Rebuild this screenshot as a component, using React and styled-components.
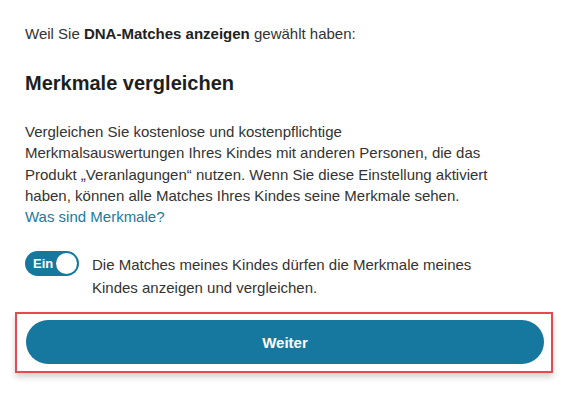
import React, { useState } from 'react'
import styled, { createGlobalStyle } from 'styled-components'

const GlobalStyle = createGlobalStyle`
  html, body {
    margin: 0;
    padding: 0;
    background: #fff;
  }
  body {
    font-family: "Liberation Sans", Arial, sans-serif;
    color: #333;
  }
`

const Page = styled.div`
  width: 566px;
  height: 394px;
  box-sizing: border-box;
  padding: 24px 22px 0 25px;
  overflow: hidden;
`

const Intro = styled.p`
  margin: 0;
  font-size: 15px;
  line-height: 20px;
  color: #333;
  b {
    font-weight: 700;
    color: #222;
  }
`

const Heading = styled.h2`
  margin: 26px 0 0;
  font-size: 20px;
  line-height: 26px;
  font-weight: 700;
  color: #1e1e1e;
`

const Body = styled.p`
  margin: 25px 0 0;
  font-size: 15px;
  line-height: 21.3px;
  color: #333;
`

const Link = styled.a`
  color: #1b7aa0;
  text-decoration: none;
`

const ToggleRow = styled.div`
  display: flex;
  align-items: flex-start;
  gap: 13px;
  margin-top: 23px;
`

const Switch = styled.button`
  flex: none;
  display: flex;
  align-items: center;
  justify-content: space-between;
  width: 54px;
  height: 25px;
  padding: 0 2px 0 8px;
  box-sizing: border-box;
  border: none;
  border-radius: 13px;
  background: ${p => (p.$on ? '#17789f' : '#999')};
  color: #fff;
  font-family: inherit;
  font-size: 13px;
  font-weight: 700;
  cursor: pointer;
  margin-top: 1px;
`

const Knob = styled.span`
  width: 21px;
  height: 21px;
  border-radius: 50%;
  background: #fff;
`

const ToggleLabel = styled.span`
  font-size: 15px;
  line-height: 22.5px;
  color: #333;
  padding-top: 4px;
`

const Highlight = styled.div`
  margin: 13px 0 0 -10px;
  width: 538px;
  box-sizing: border-box;
  border: 2px solid #e44a4f;
  padding: 6px 7px 7px 9px;
  box-shadow: 0 4px 6px rgba(0, 0, 0, 0.18);
`

const PrimaryButton = styled.button`
  display: block;
  width: 100%;
  height: 44px;
  border: none;
  border-radius: 22px;
  background: #17789f;
  color: #fff;
  font-family: inherit;
  font-size: 15px;
  font-weight: 700;
  cursor: pointer;
`

export default function App() {
  const [on, setOn] = useState(true)
  return (
    <>
      <GlobalStyle />
      <Page>
        <Intro>
          Weil Sie <b>DNA-Matches anzeigen</b> gewählt haben:
        </Intro>
        <Heading>Merkmale vergleichen</Heading>
        <Body>
          Vergleichen Sie kostenlose und kostenpflichtige
          <br />
          Merkmalsauswertungen Ihres Kindes mit anderen Personen, die das
          <br />
          Produkt „Veranlagungen“ nutzen. Wenn Sie diese Einstellung aktiviert
          <br />
          haben, können alle Matches Ihres Kindes seine Merkmale sehen.
          <br />
          <Link href="#">Was sind Merkmale?</Link>
        </Body>
        <ToggleRow>
          <Switch $on={on} onClick={() => setOn(!on)}>
            {on ? 'Ein' : 'Aus'}
            <Knob />
          </Switch>
          <ToggleLabel>
            Die Matches meines Kindes dürfen die Merkmale meines
            <br />
            Kindes anzeigen und vergleichen.
          </ToggleLabel>
        </ToggleRow>
        <Highlight>
          <PrimaryButton>Weiter</PrimaryButton>
        </Highlight>
      </Page>
    </>
  )
}
